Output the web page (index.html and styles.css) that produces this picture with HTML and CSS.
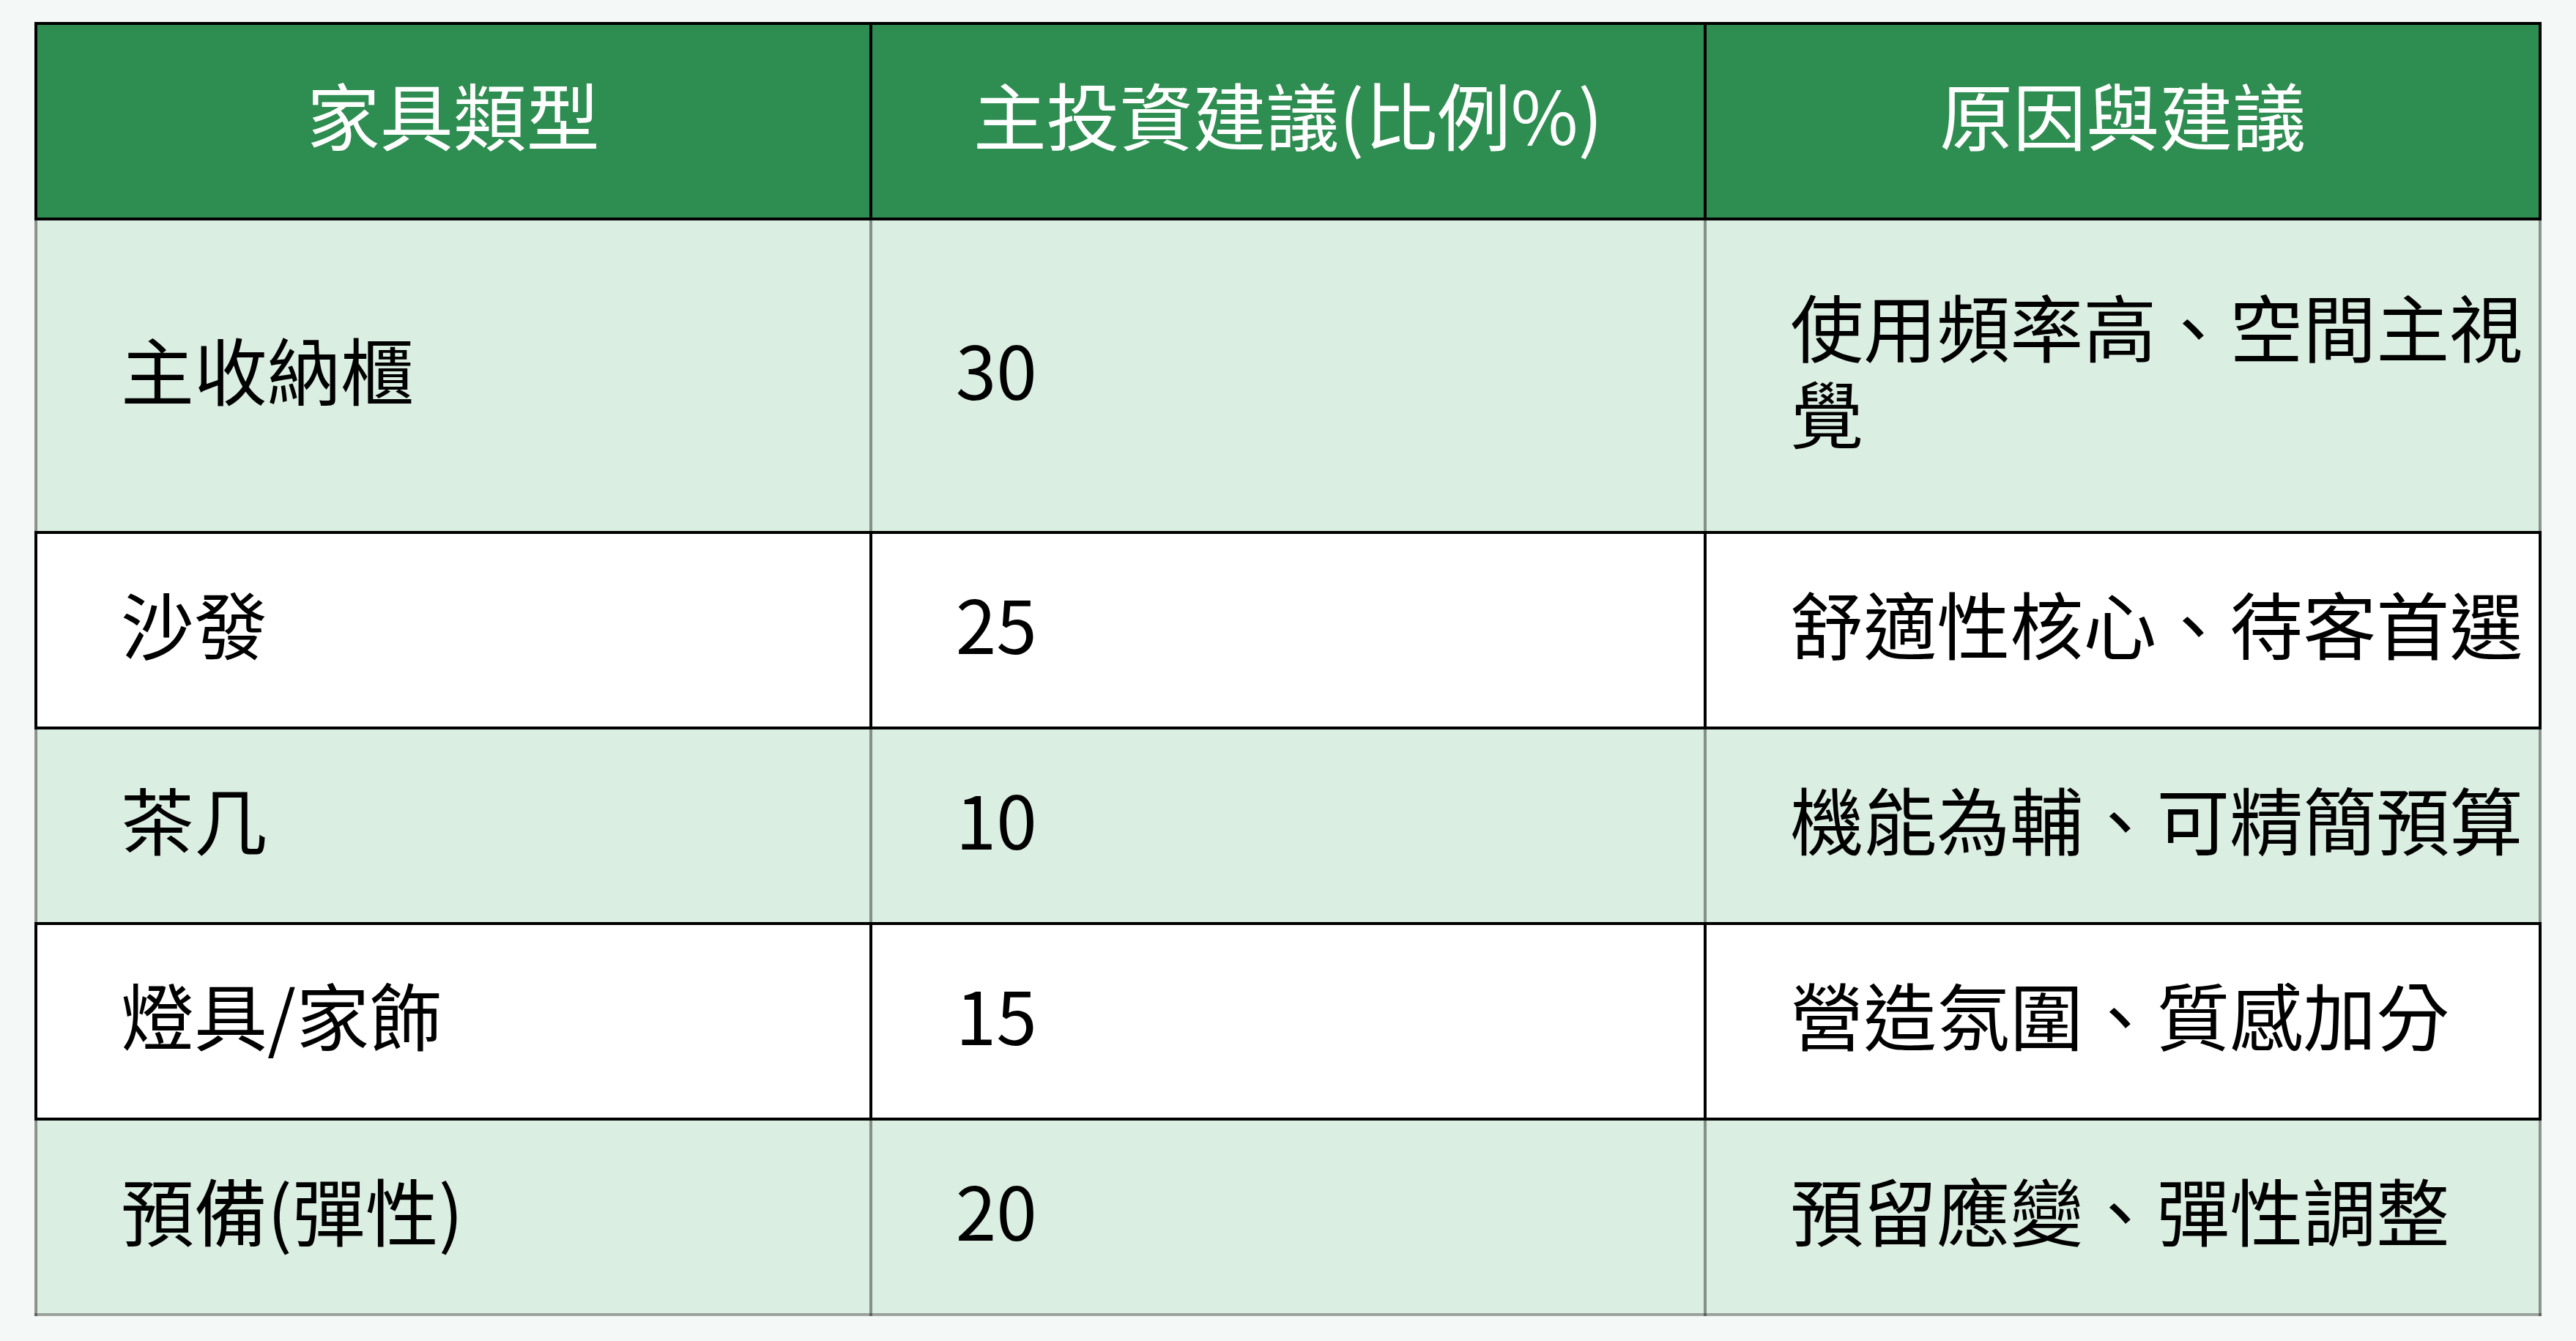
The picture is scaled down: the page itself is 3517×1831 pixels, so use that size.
FILE: index.html
```html
<!DOCTYPE html>
<html lang="zh-Hant">
<head>
<meta charset="utf-8">
<title>家具預算分配</title>
<link rel="stylesheet" href="styles.css">
</head>
<body>
<table class="budget">
  <thead>
    <tr>
      <th>家具類型</th>
      <th>主投資建議(比例%)</th>
      <th>原因與建議</th>
    </tr>
  </thead>
  <tbody>
    <tr class="tint tall">
      <td>主收納櫃</td>
      <td>30</td>
      <td>使用頻率高、空間主視覺</td>
    </tr>
    <tr>
      <td>沙發</td>
      <td>25</td>
      <td>舒適性核心、待客首選</td>
    </tr>
    <tr class="tint">
      <td>茶几</td>
      <td>10</td>
      <td>機能為輔、可精簡預算</td>
    </tr>
    <tr>
      <td>燈具/家飾</td>
      <td>15</td>
      <td>營造氛圍、質感加分</td>
    </tr>
    <tr class="tint last">
      <td>預備(彈性)</td>
      <td>20</td>
      <td>預留應變、彈性調整</td>
    </tr>
  </tbody>
</table>
</body>
</html>
```

FILE: styles.css
```css
html, body {
  margin: 0;
  padding: 0;
  background: #f4f8f7;
}

body {
  padding: 30px 47px;
  font-family: "Noto Sans CJK TC", "Noto Sans CJK SC", "Noto Sans", sans-serif;
}

.budget {
  width: 100%;
  border-collapse: collapse;
  table-layout: fixed;
  font-size: 100px;
  line-height: 118px;
}

.budget th,
.budget td {
  border: 4px solid #000;
  padding: 62px 18px 83px 114px;
  vertical-align: middle;
  font-weight: 400;
}

.budget th {
  background: #2e8d50;
  color: #fff;
  text-align: center;
  padding-left: 0;
  padding-right: 0;
}

.budget td {
  background: #fff;
  color: #000;
  text-align: left;
}

.budget .tint td {
  background: #dbeee2;
  border-left-color: rgba(0, 0, 0, 0.4);
  border-right-color: rgba(0, 0, 0, 0.4);
}

.budget .tall td {
  padding-top: 84px;
  padding-bottom: 104px;
}

.budget .last td {
  border-bottom-color: rgba(0, 0, 0, 0.33);
}
```
